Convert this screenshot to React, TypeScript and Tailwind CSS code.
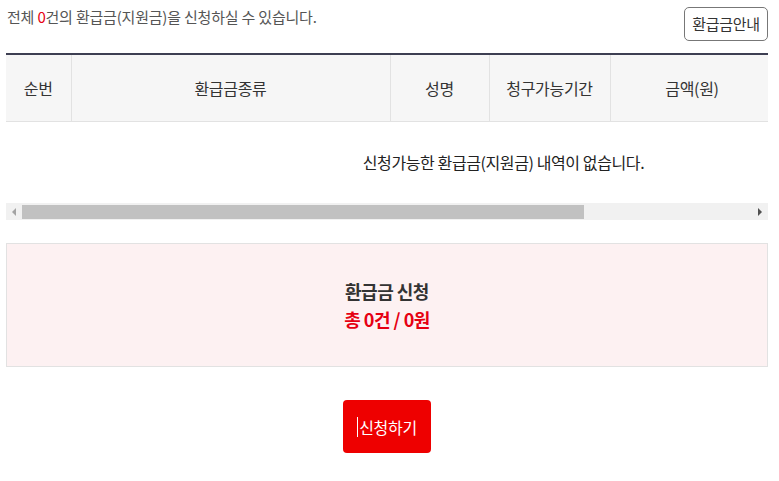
const columns = [
  { label: "순번", w: "w-[65px]" },
  { label: "환급금종류", w: "w-[319px]" },
  { label: "성명", w: "w-[99px]" },
  { label: "청구가능기간", w: "w-[121px]" },
  { label: "금액(원)", w: "w-[164px]" },
  { label: "", w: "w-[120px]" },
  { label: "", w: "w-[107px]" },
];

const App = () => {
  return (
    <div className="w-[779px] h-[481px] bg-white px-[6px] pt-[7px] font-['Noto_Sans_CJK_KR','Noto_Sans',sans-serif] text-[#333]">
      {/* 상단 안내 */}
      <div className="flex items-start justify-between pr-[5px]">
        <p className="text-[15px] leading-[20px] text-[#555] pl-[1px] tracking-[-0.2px]">
          전체 <span className="text-[#e60012]">0</span>건의 환급금(지원금)을 신청하실 수 있습니다.
        </p>
        <button className="w-[84px] h-[34px] border border-[#777] rounded-[5px] text-[15px] text-[#333] bg-white tracking-[-0.3px]">
          환급금안내
        </button>
      </div>

      {/* 테이블 */}
      <div className="mt-[12px] w-[762px] overflow-hidden">
        <table className="w-[995px] border-collapse table-fixed border-t-2 border-[#3d3f52]">
          <thead>
            <tr className="bg-[#f6f6f6] border-b border-[#e2e2e2]">
              {columns.map((c, i) => (
                <th
                  key={i}
                  className={`${c.w} h-[67px] text-[16px] font-normal text-[#333] tracking-[-0.3px] ${i > 0 ? "border-l border-[#e2e2e2]" : ""}`}
                >
                  {c.label}
                </th>
              ))}
            </tr>
          </thead>
          <tbody>
            <tr>
              <td colSpan={7} className="h-[82px] text-center text-[16px] text-[#222] tracking-[-0.4px]">
                신청가능한 환급금(지원금) 내역이 없습니다.
              </td>
            </tr>
          </tbody>
        </table>
        {/* 가로 스크롤바 */}
        <div className="h-[17px] bg-[#f1f1f1] flex items-center">
          <div className="w-[16px] h-full flex items-center justify-center">
            <div className="w-0 h-0 border-y-[4px] border-y-transparent border-r-[4px] border-r-[#a3a3a3]" />
          </div>
          <div className="h-[14px] w-[562px] bg-[#c1c1c1]" />
          <div className="flex-1" />
          <div className="w-[16px] h-full flex items-center justify-center">
            <div className="w-0 h-0 border-y-[4px] border-y-transparent border-l-[4px] border-l-[#505050]" />
          </div>
        </div>
      </div>

      {/* 신청 요약 */}
      <div className="mt-[23px] w-[762px] h-[124px] bg-[#fdf1f2] border border-[#e2e2e2] flex flex-col items-center justify-center">
        <p className="text-[18px] font-bold leading-[28px] text-[#333] tracking-[-0.5px]">환급금 신청</p>
        <p className="text-[18px] font-bold leading-[28px] text-[#e60012] tracking-[-0.5px]">총 0건 / 0원</p>
      </div>

      {/* 신청 버튼 */}
      <div className="mt-[33px] w-[762px] flex justify-center">
        <button className="w-[88px] h-[53px] bg-[#ee0000] rounded-[4px] text-white text-[16px] tracking-[-0.3px] flex items-center justify-center">
          <span className="inline-block w-px h-[20px] bg-white mr-[1px]" />
          신청하기
        </button>
      </div>
    </div>
  );
};

export default App;
